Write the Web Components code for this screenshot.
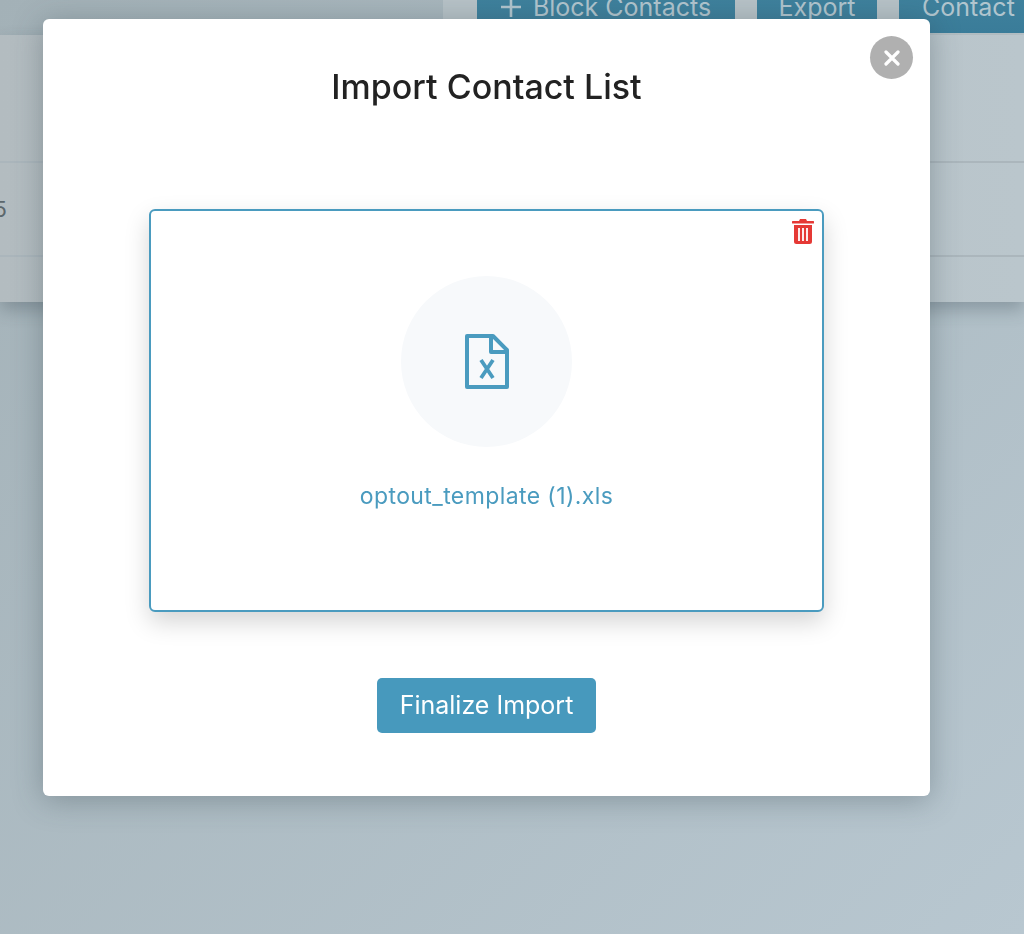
<!DOCTYPE html>
<html>
<head>
<meta charset="utf-8">
<title>Import Contact List</title>
<style>
  html, body { margin: 0; height: 100%; }
  body { font-family: Inter, "Liberation Sans", sans-serif; overflow: hidden; }
</style>
</head>
<body>
<contact-page>
  <tool-button slot="tools" style="width:258px" plus>Block Contacts</tool-button>
  <tool-button slot="tools" style="width:120px">Export</tool-button>
  <tool-button slot="tools" style="width:160px" start>Contact</tool-button>
</contact-page>
<import-modal heading="Import Contact List">
  <file-drop name="optout_template (1).xls"></file-drop>
  <finalize-button slot="action">Finalize Import</finalize-button>
</import-modal>

<script>
class ToolButton extends HTMLElement {
  constructor() {
    super();
    this.shadowDOM = this.attachShadow({mode: "open"});
  }

  connectedCallback() {
    const plus = this.hasAttribute("plus") ? `<svg width="20" height="20" viewBox="0 0 20 20"><path d="M10 0v20M0 10h20" stroke="#b1c5ce" stroke-width="2.6"/></svg>` : "";
    this.shadowDOM.innerHTML = `
    <style>
    :host {
      display: flex;
      flex: none;
      height: 52px;
      align-items: center;
      justify-content: ${this.hasAttribute("start") ? "flex-start" : "center"};
      padding-left: ${this.hasAttribute("start") ? "23px" : "0"};
      box-sizing: border-box;
      gap: 12px;
      background: linear-gradient(#41849f, #3a7c99);
      color: #b1c5ce;
      font-size: 25px;
      white-space: nowrap;
    }
    </style>
    ${plus}<slot></slot>`;
  }
}
customElements.define("tool-button", ToolButton);

class ContactPage extends HTMLElement {
  constructor() {
    super();
    this.shadowDOM = this.attachShadow({mode: "open"});
    this.shadowDOM.innerHTML = `
    <style>
    :host {
      display: block;
      height: 934px;
      background: linear-gradient(135deg, #a3b1b7 0%, #b8c7d0 100%);
    }
    .top {
      height: 35px;
      overflow: hidden;
      display: flex;
      align-items: flex-end;
      margin-left: 443px;
      padding: 0 0 2px 34px;
      gap: 22px;
      background: #b7c2c7;
      box-sizing: border-box;
    }
    .table {
      height: 267px;
      overflow: hidden;
      background: linear-gradient(90deg, #b3bcc0, #bac6cc);
      display: grid;
      grid-template-rows: 128px 94px 1fr;
      color: #5c676c;
      font-size: 22px;
    }
    .wrap { box-shadow: 0 8px 16px rgba(50, 65, 75, .3); }
    .row { border-bottom: 2px solid #abb6bc; display: flex; align-items: center; }
    .row:last-child { border: 0; }
    .num { margin-left: -20px; }
    </style>
    <div class="top"><slot name="tools"></slot></div>
    <div class="wrap">
      <div class="table">
        <div class="row"></div>
        <div class="row"><span class="num">25</span></div>
        <div class="row"></div>
      </div>
    </div>`;
  }
}
customElements.define("contact-page", ContactPage);

class FileDrop extends HTMLElement {
  constructor() {
    super();
    this.shadowDOM = this.attachShadow({mode: "open"});
  }

  connectedCallback() {
    this.shadowDOM.innerHTML = `
    <style>
    :host {
      display: flex;
      flex-direction: column;
      align-items: center;
      position: relative;
      box-sizing: border-box;
      width: 675px;
      height: 403px;
      padding-top: 65px;
      background: #fff;
      border: 2px solid #4a9bbf;
      border-radius: 6px;
      box-shadow: 0 10px 24px rgba(0, 0, 0, .17);
    }
    .trash { position: absolute; top: 8px; right: 8px; display: block; }
    .circle {
      width: 171px;
      height: 171px;
      border-radius: 50%;
      background: #f7f9fb;
      display: flex;
      align-items: center;
      justify-content: center;
    }
    .name {
      margin-top: 35px;
      font-size: 23px;
      letter-spacing: .4px;
      line-height: 28px;
      color: #4a9bbf;
      white-space: nowrap;
    }
    </style>
    <svg class="trash" width="22" height="25" viewBox="0 0 22 25">
      <path fill="#e53935" d="M8 0h6l1 2h6a1 1 0 0 1 0 2.600H1A1 1 0 0 1 1 2h6zM2 6h18v16.500a2.500 2.500 0 0 1-2.500 2.500h-13A2.500 2.500 0 0 1 2 22.500z"/>
      <path stroke="#fff" stroke-width="1.800" d="M7 9v13M11 9v13M15 9v13"/>
    </svg>
    <div class="circle">
      <svg width="44" height="55" viewBox="0 0 44 55">
        <path fill="none" stroke="#4a9bbf" stroke-width="4" stroke-linejoin="round" d="M2 2h26l14 14v37H2zM26 2v16h16"/>
        <path fill="none" stroke="#4a9bbf" stroke-width="3.800" d="M16 26l12 18M28 26L16 44"/>
      </svg>
    </div>
    <div class="name">${this.getAttribute("name")}</div>`;
  }
}
customElements.define("file-drop", FileDrop);

class FinalizeButton extends HTMLElement {
  constructor() {
    super();
    this.attachShadow({mode: "open"}).innerHTML = `
    <style>
    :host {
      display: flex;
      align-items: center;
      justify-content: center;
      width: 219px;
      height: 55px;
      padding-bottom: 2px;
      box-sizing: border-box;
      background: #4799bd;
      border-radius: 5px;
      color: #fff;
      font-size: 25px;
      cursor: pointer;
    }
    </style>
    <slot></slot>`;
  }
}
customElements.define("finalize-button", FinalizeButton);

class ImportModal extends HTMLElement {
  constructor() {
    super();
    this.shadowDOM = this.attachShadow({mode: "open"});
  }

  connectedCallback() {
    this.shadowDOM.innerHTML = `
    <style>
    :host {
      position: fixed;
      inset: 0;
      display: block;
      padding: 19px 94px 0 43px;
    }
    .dialog {
      position: relative;
      box-sizing: border-box;
      height: 777px;
      padding-top: 46px;
      display: flex;
      flex-direction: column;
      align-items: center;
      background: #fff;
      border-radius: 6px;
      box-shadow: 0 4px 30px rgba(50, 65, 75, .35);
    }
    h2 {
      margin: 0 0 100px;
      font-size: 34px;
      line-height: 44px;
      font-weight: 500;
      color: #222;
      white-space: nowrap;
    }
    .close {
      position: absolute;
      top: 17px;
      right: 17px;
      width: 43px;
      height: 43px;
      border-radius: 50%;
      background: #b0b0b0;
      display: flex;
      align-items: center;
      justify-content: center;
    }
    .action { margin-top: 66px; }
    </style>
    <div class="dialog">
      <h2>${this.getAttribute("heading")}</h2>
      <div class="close">
        <svg width="16" height="16" viewBox="0 0 16 16"><path d="M2 2l12 12M14 2L2 14" stroke="#fff" stroke-width="3.200" stroke-linecap="round"/></svg>
      </div>
      <slot></slot>
      <div class="action"><slot name="action"></slot></div>
    </div>`;
  }
}
customElements.define("import-modal", ImportModal);
</script>
</body>
</html>
